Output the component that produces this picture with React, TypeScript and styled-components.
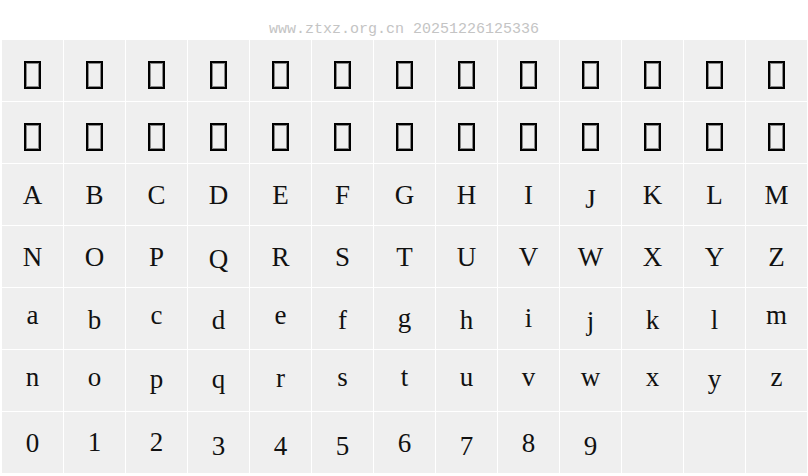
import React from "react";
import styled, { createGlobalStyle } from "styled-components";

const GlobalStyle = createGlobalStyle`
  html, body {
    margin: 0;
    padding: 0;
    background: #ffffff;
  }
`;

const Page = styled.div`
  width: 808px;
  height: 476px;
  overflow: hidden;
  background: #ffffff;
`;

const Stamp = styled.div`
  height: 40px;
  box-sizing: border-box;
  padding-top: 21px;
  text-align: center;
  font-family: "Liberation Mono", "DejaVu Sans Mono", monospace;
  font-size: 15px;
  line-height: 17px;
  color: #c4c4c4;
`;

const Grid = styled.div`
  display: grid;
  grid-template-columns: repeat(13, 61px);
  grid-auto-rows: 61px;
  gap: 1px;
  margin-left: 2px;
`;

const Cell = styled.div`
  display: flex;
  justify-content: center;
  align-items: flex-start;
  padding-top: 16px;
  box-sizing: border-box;
  background: #efefef;
`;

const Glyph = styled.span<{ $shift: number }>`
  font-family: "Liberation Serif", "Times New Roman", serif;
  font-size: 27px;
  line-height: normal;
  color: #111111;
  transform: translateY(${(p) => p.$shift}px);
`;

const Tofu = styled.span`
  display: block;
  width: 17px;
  height: 28px;
  margin-top: 5px;
  box-sizing: border-box;
  border: 2px solid #000000;
  box-shadow: inset 0 0 0 1px #8a8a8a;
`;

// vertical nudges so the glyphs sit roughly where the reference font puts them
const shifts: Record<string, number> = {
  J: 4, Q: 2,
  a: -4, c: -4, e: -4, m: -4, n: -4, o: -4, s: -4, u: -4, v: -4, w: -4, x: -4, z: -4, t: -4,
  r: -3, p: -2, q: -2, y: -2,
  b: 1, d: 1, f: 1, h: 1, k: 1, l: 1,
  i: -1, j: 2, g: -1,
  "1": -1, "2": -1,
  "3": 3, "4": 3, "5": 3, "7": 3, "9": 3,
};

const upper = "ABCDEFGHIJKLMNOPQRSTUVWXYZ".split("");
const lower = "abcdefghijklmnopqrstuvwxyz".split("");
const digits = "0123456789".split("");

export default function App() {
  const tofus = Array.from({ length: 26 });
  const chars = [...upper, ...lower, ...digits];
  const blanks = Array.from({ length: 3 });

  return (
    <Page>
      <GlobalStyle />
      <Stamp>www.ztxz.org.cn 20251226125336</Stamp>
      <Grid>
        {tofus.map((_, i) => (
          <Cell key={"t" + i}>
            <Tofu />
          </Cell>
        ))}
        {chars.map((c) => (
          <Cell key={c}>
            <Glyph $shift={shifts[c] ?? 0}>{c}</Glyph>
          </Cell>
        ))}
        {blanks.map((_, i) => (
          <Cell key={"b" + i} />
        ))}
      </Grid>
    </Page>
  );
}
